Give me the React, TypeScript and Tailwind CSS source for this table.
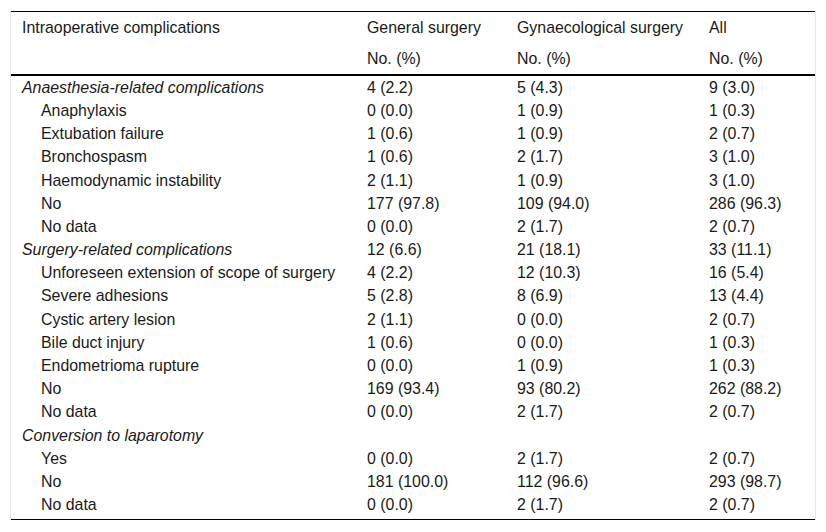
import React from "react";

type Row = { label: string; kind: "group" | "item"; a: string; b: string; c: string };

const rows: Row[] = [
  { label: "Anaesthesia-related complications", kind: "group", a: "4 (2.2)", b: "5 (4.3)", c: "9 (3.0)" },
  { label: "Anaphylaxis", kind: "item", a: "0 (0.0)", b: "1 (0.9)", c: "1 (0.3)" },
  { label: "Extubation failure", kind: "item", a: "1 (0.6)", b: "1 (0.9)", c: "2 (0.7)" },
  { label: "Bronchospasm", kind: "item", a: "1 (0.6)", b: "2 (1.7)", c: "3 (1.0)" },
  { label: "Haemodynamic instability", kind: "item", a: "2 (1.1)", b: "1 (0.9)", c: "3 (1.0)" },
  { label: "No", kind: "item", a: "177 (97.8)", b: "109 (94.0)", c: "286 (96.3)" },
  { label: "No data", kind: "item", a: "0 (0.0)", b: "2 (1.7)", c: "2 (0.7)" },
  { label: "Surgery-related complications", kind: "group", a: "12 (6.6)", b: "21 (18.1)", c: "33 (11.1)" },
  { label: "Unforeseen extension of scope of surgery", kind: "item", a: "4 (2.2)", b: "12 (10.3)", c: "16 (5.4)" },
  { label: "Severe adhesions", kind: "item", a: "5 (2.8)", b: "8 (6.9)", c: "13 (4.4)" },
  { label: "Cystic artery lesion", kind: "item", a: "2 (1.1)", b: "0 (0.0)", c: "2 (0.7)" },
  { label: "Bile duct injury", kind: "item", a: "1 (0.6)", b: "0 (0.0)", c: "1 (0.3)" },
  { label: "Endometrioma rupture", kind: "item", a: "0 (0.0)", b: "1 (0.9)", c: "1 (0.3)" },
  { label: "No", kind: "item", a: "169 (93.4)", b: "93 (80.2)", c: "262 (88.2)" },
  { label: "No data", kind: "item", a: "0 (0.0)", b: "2 (1.7)", c: "2 (0.7)" },
  { label: "Conversion to laparotomy", kind: "group", a: "", b: "", c: "" },
  { label: "Yes", kind: "item", a: "0 (0.0)", b: "2 (1.7)", c: "2 (0.7)" },
  { label: "No", kind: "item", a: "181 (100.0)", b: "112 (96.6)", c: "293 (98.7)" },
  { label: "No data", kind: "item", a: "0 (0.0)", b: "2 (1.7)", c: "2 (0.7)" },
];

const grid = "grid grid-cols-[345px_150px_192px_117px]";
const head = "pl-[11px] py-[6.5px] leading-[18px]";
const cell = "pl-[11px] pt-[2.8px] pb-[2.4px] leading-[18px]";

export default function App() {
  return (
    <div className="min-h-[532px] bg-white pt-[11px] pl-[10px] text-[15.9px] text-[#1a1a1a]" style={{ fontFamily: '"Liberation Sans", Arial, sans-serif' }}>
      <div className="w-[806px] border-x border-[#e6e6e6]">
        <div className="border-t border-black">
          <div className={grid}>
            <div className={head}>Intraoperative complications</div>
            <div className={head}>General surgery</div>
            <div className={head}>Gynaecological surgery</div>
            <div className={head}>All</div>
          </div>
          <div className={`${grid} border-b-2 border-black`}>
            <div className={head}></div>
            <div className={head}>No. (%)</div>
            <div className={head}>No. (%)</div>
            <div className={head}>No. (%)</div>
          </div>
          <div className="border-b border-black pb-[2.5px]">
            {rows.map((r, i) => (
              <div key={i} className={grid}>
                <div className={r.kind === "group" ? `${cell} italic` : `${cell} pl-[30px]`}>{r.label}</div>
                <div className={cell}>{r.a}</div>
                <div className={cell}>{r.b}</div>
                <div className={cell}>{r.c}</div>
              </div>
            ))}
          </div>
        </div>
      </div>
    </div>
  );
}
